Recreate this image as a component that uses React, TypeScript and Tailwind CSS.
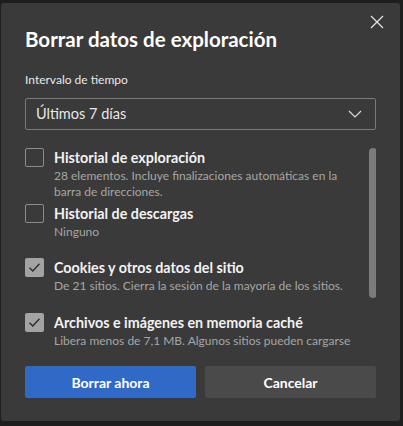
import React from "react";

const font = { fontFamily: 'Lato, "Open Sans", sans-serif' };

type Item = { label: string; desc: string; checked: boolean; h: string };

const items: Item[] = [
  {
    label: "Historial de exploración",
    desc: "28 elementos. Incluye finalizaciones automáticas en la barra de direcciones.",
    checked: false,
    h: "h-[56px]",
  },
  { label: "Historial de descargas", desc: "Ninguno", checked: false, h: "h-[54px]" },
  {
    label: "Cookies y otros datos del sitio",
    desc: "De 21 sitios. Cierra la sesión de la mayoría de los sitios.",
    checked: true,
    h: "h-[55px]",
  },
  {
    label: "Archivos e imágenes en memoria caché",
    desc: "Libera menos de 7,1 MB. Algunos sitios pueden cargarse",
    checked: true,
    h: "h-[36px]",
  },
];

function Checkbox({ checked }: { checked: boolean }) {
  if (checked) {
    return (
      <div className="w-[19px] h-[19px] shrink-0 rounded-[2px] bg-[#a3a3a3] flex items-center justify-center">
        <svg width="13" height="13" viewBox="0 0 13 13" fill="none">
          <path d="M1.5 6.8 L4.8 10 L11.5 2.8" stroke="#2c2c2c" strokeWidth="1.4" />
        </svg>
      </div>
    );
  }
  return <div className="w-[19px] h-[19px] shrink-0 rounded-[2px] border border-[#8c8c8c]" />;
}

export default function App() {
  return (
    <div className="w-[403px] h-[426px] bg-[#1e1e1e] overflow-hidden" style={font}>
      <div className="relative ml-[1px] mt-[3px] w-[399px] h-[418px] bg-[#3a3a3a] rounded-[3px] pl-[24px] pr-[24px] pt-[22px] flex flex-col">
        <button className="absolute top-[11px] right-[15px] w-[16px] h-[16px] flex items-center justify-center">
          <svg width="14" height="14" viewBox="0 0 14 14">
            <path d="M1 1 L13 13 M13 1 L1 13" stroke="#e6e6e6" strokeWidth="1.2" />
          </svg>
        </button>
        <h1 className="text-[20.5px] leading-[28px] font-bold text-white">
          Borrar datos de exploración
        </h1>
        <div className="mt-[18px] text-[12px] leading-[18px] text-[#e8e8e8]">Intervalo de tiempo</div>
        <div className="mt-[9px] h-[32px] border border-[#7a7a7a] rounded-[2px] flex items-center justify-between pl-[10px] pr-[13px]">
          <span className="text-[14.5px] text-[#e8e8e8]">Últimos 7 días</span>
          <svg width="14" height="8" viewBox="0 0 14 8" fill="none">
            <path d="M1 1 L7 7 L13 1" stroke="#dcdcdc" strokeWidth="1.2" />
          </svg>
        </div>
        <div className="mt-[18px] h-[201px] overflow-hidden flex">
          <div className="flex-1 flex flex-col pr-[10px]">
            {items.map((it) => (
              <div key={it.label} className={`flex gap-[10px] shrink-0 ${it.h}`}>
                <Checkbox checked={it.checked} />
                <div>
                  <div className="text-[14.3px] leading-[20px] font-bold text-[#f2f2f2]">{it.label}</div>
                  <div className="text-[12px] leading-[16px] text-[#a6a6a6]">{it.desc}</div>
                </div>
              </div>
            ))}
          </div>
          <div className="w-[8px] h-[150px] rounded-full bg-[#7b7b7b] mr-[-1px]" />
        </div>
        <div className="mt-[17px] grid grid-cols-2 gap-[9px]">
          <button className="h-[32px] rounded-[2px] bg-[#3169c6] text-white text-[14px] font-bold">
            Borrar ahora
          </button>
          <button className="h-[32px] rounded-[2px] bg-[#4a4a4a] text-white text-[14px] font-bold">
            Cancelar
          </button>
        </div>
      </div>
    </div>
  );
}
